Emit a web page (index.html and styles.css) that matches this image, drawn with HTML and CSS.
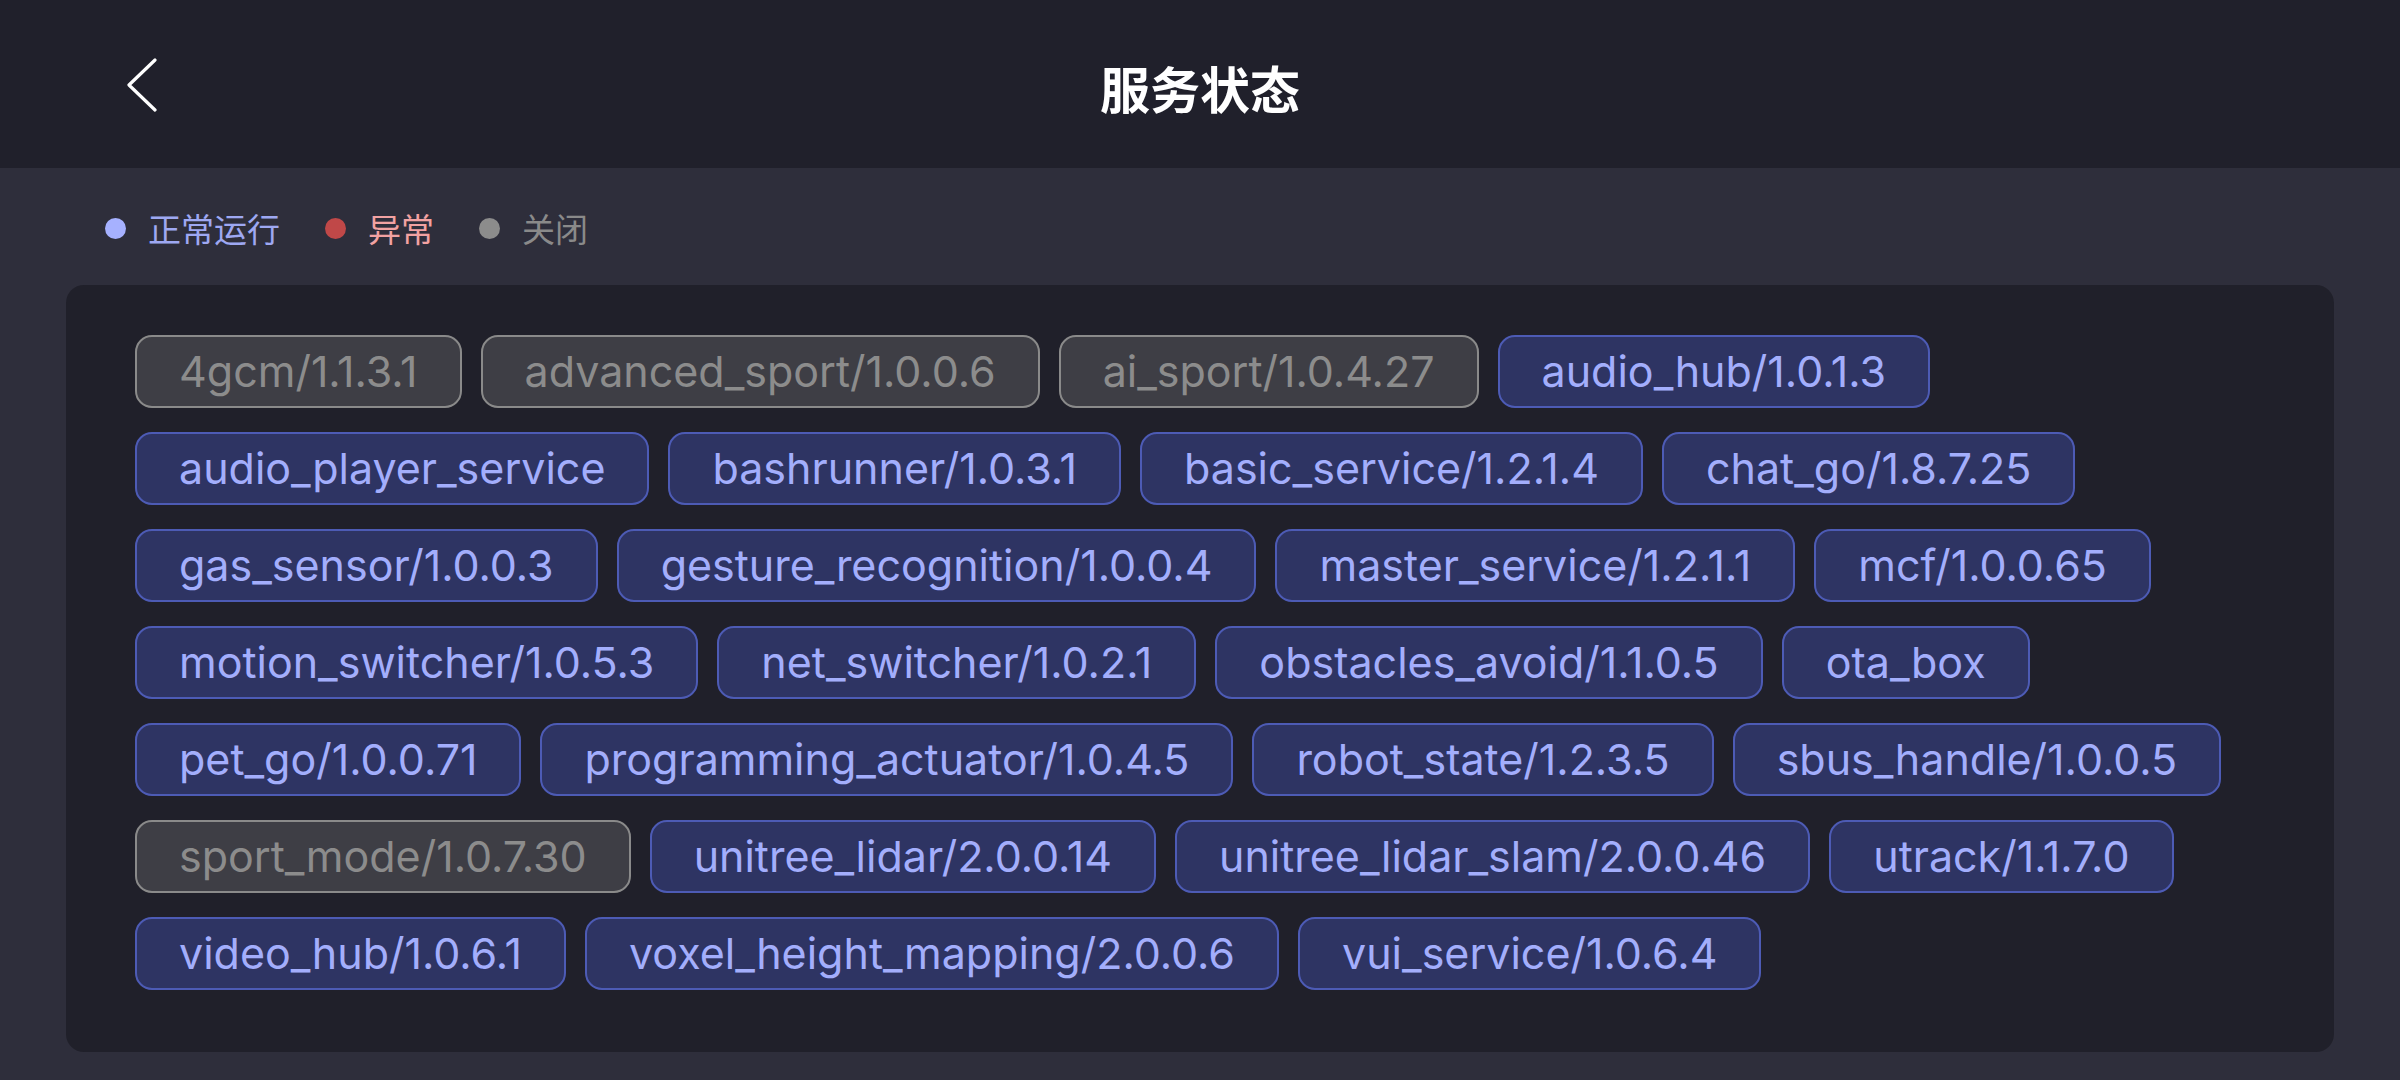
FILE: index.html
```html
<!DOCTYPE html>
<html lang="zh-CN">
<head>
    <meta charset="UTF-8">
    <meta name="viewport" content="width=device-width, initial-scale=1.0">
    <title>服务状态</title>
    <link rel="stylesheet" href="styles.css">
</head>
<body>
    <header class="top-bar">
        <button class="back-btn" aria-label="返回">
            <svg width="30" height="54" viewBox="0 0 30 54">
                <polyline points="28,2 2,27 28,52" fill="none" stroke="#ffffff" stroke-width="3.2" stroke-linecap="round" stroke-linejoin="round"/>
            </svg>
        </button>
        <h1 class="title">服务状态</h1>
        <div></div>
    </header>

    <main class="content">
        <div class="legend">
            <span class="legend-item running"><i class="dot"></i>正常运行</span>
            <span class="legend-item error"><i class="dot"></i>异常</span>
            <span class="legend-item closed"><i class="dot"></i>关闭</span>
        </div>

        <div class="service-panel">
            <span class="tag off">4gcm/1.1.3.1</span>
            <span class="tag off">advanced_sport/1.0.0.6</span>
            <span class="tag off">ai_sport/1.0.4.27</span>
            <span class="tag">audio_hub/1.0.1.3</span>
            <span class="tag">audio_player_service</span>
            <span class="tag">bashrunner/1.0.3.1</span>
            <span class="tag">basic_service/1.2.1.4</span>
            <span class="tag">chat_go/1.8.7.25</span>
            <span class="tag">gas_sensor/1.0.0.3</span>
            <span class="tag">gesture_recognition/1.0.0.4</span>
            <span class="tag">master_service/1.2.1.1</span>
            <span class="tag">mcf/1.0.0.65</span>
            <span class="tag">motion_switcher/1.0.5.3</span>
            <span class="tag">net_switcher/1.0.2.1</span>
            <span class="tag">obstacles_avoid/1.1.0.5</span>
            <span class="tag">ota_box</span>
            <span class="tag">pet_go/1.0.0.71</span>
            <span class="tag">programming_actuator/1.0.4.5</span>
            <span class="tag">robot_state/1.2.3.5</span>
            <span class="tag">sbus_handle/1.0.0.5</span>
            <span class="tag off">sport_mode/1.0.7.30</span>
            <span class="tag">unitree_lidar/2.0.0.14</span>
            <span class="tag">unitree_lidar_slam/2.0.0.46</span>
            <span class="tag">utrack/1.1.7.0</span>
            <span class="tag">video_hub/1.0.6.1</span>
            <span class="tag">voxel_height_mapping/2.0.0.6</span>
            <span class="tag">vui_service/1.0.6.4</span>
        </div>
    </main>
</body>
</html>
```

FILE: styles.css
```css
body {
    margin: 0;
    height: 1080px;
    overflow: hidden;
    background-color: #2e2e3b;
    font-family: Inter, "Noto Sans CJK SC", sans-serif;
}
.top-bar {
    height: 168px;
    background-color: #20202b;
    display: grid;
    grid-template-columns: 1fr auto 1fr;
    align-items: center;
    padding-left: 127px;
    box-sizing: border-box;
}
.back-btn {
    justify-self: start;
    background: none;
    border: none;
    padding: 0;
    margin-top: 2px;
    cursor: pointer;
    display: flex;
}
.title {
    margin: 0;
    margin-left: -127px;
    color: #ffffff;
    font-family: "Noto Sans CJK SC", sans-serif;
    font-size: 50px;
    font-weight: 700;
    line-height: 60px;
    margin-top: 6px;
}
.content {
    padding: 0 66px;
}
.legend {
    display: flex;
    gap: 45px;
    padding: 40px 39px 0;
    height: 40px;
    margin-bottom: 37px;
}
.legend-item {
    display: flex;
    align-items: center;
    gap: 22px;
    font-family: "Noto Sans CJK SC", sans-serif;
    font-size: 33px;
    line-height: 40px;
}
.dot {
    width: 21px;
    height: 21px;
    border-radius: 50%;
}
.running { color: #9ea8f2; }
.running .dot { background-color: #a6b1ff; }
.error { color: #f2a2a2; }
.error .dot { background-color: #c04848; }
.closed { color: #8a8a8a; }
.closed .dot { background-color: #8c8c8c; }
.service-panel {
    background-color: #20202a;
    border-radius: 18px;
    padding: 50px 69px 62px;
    display: flex;
    flex-wrap: wrap;
    gap: 24px 19px;
    align-content: flex-start;
}
.tag {
    font-size: 43px;
    line-height: 69px;
    padding: 0 42px;
    border: 2px solid #4d5bb5;
    border-radius: 17px;
    background-color: #2e3463;
    color: #a3aefc;
    white-space: nowrap;
}
.tag.off {
    border-color: #8a8a8a;
    background-color: #3e3e45;
    color: #8c8c8c;
}
```
